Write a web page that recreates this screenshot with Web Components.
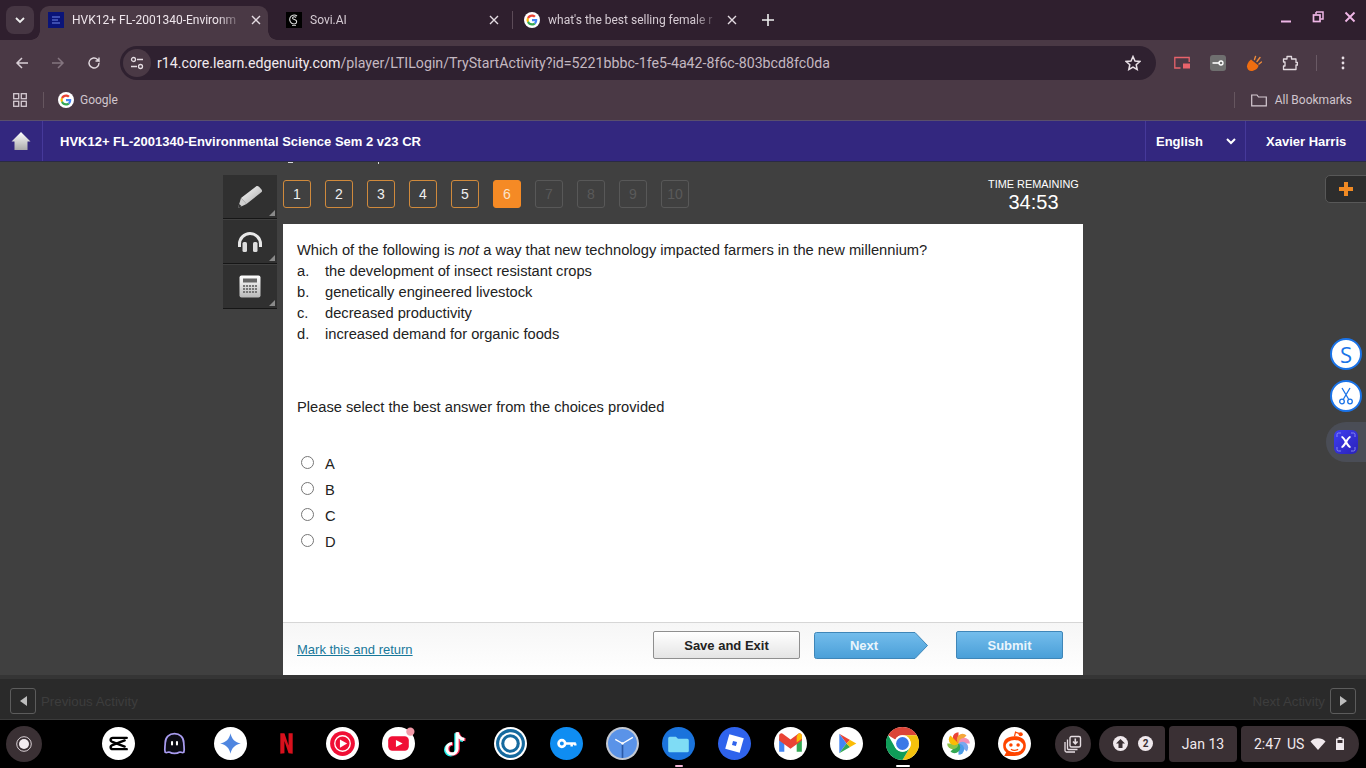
<!DOCTYPE html>
<html>
<head>
<meta charset="utf-8">
<title>Edgenuity</title>
<style>
  html, body { margin: 0; height: 768px; overflow: hidden; background: #000; }
  body { display: flex; flex-direction: column; font-family: "Liberation Sans", Arial, sans-serif; }
</style>
</head>
<body>
<tab-strip></tab-strip>
<browser-toolbar></browser-toolbar>
<bookmark-bar></bookmark-bar>
<course-header></course-header>
<quiz-stage>
  <quiz-question></quiz-question>
</quiz-stage>
<activity-bar></activity-bar>
<os-shelf></os-shelf>

<script>
const G_ICON = `<svg viewBox="0 0 48 48" width="100%" height="100%"><circle cx="24" cy="24" r="24" fill="#fff"/><g transform="translate(7.5 7.5) scale(.6875)"><path fill="#EA4335" d="M24 9.5c3.5 0 6.7 1.2 9.2 3.6l6.9-6.9C35.900 2.400 30.500 0 24 0 14.600 0 6.500 5.400 2.600 13.200l8 6.200C12.500 13.700 17.800 9.500 24 9.500z"/><path fill="#4285F4" d="M46.900 24.500c0-1.600-.1-3.100-.4-4.500H24v9h12.900c-.6 3-2.200 5.500-4.700 7.200l7.700 6c4.500-4.200 7-10.300 7-17.700z"/><path fill="#FBBC05" d="M10.500 28.600A14.500 14.500 0 0 1 10.500 19.400l-8-6.200A24 24 0 0 0 2.600 34.800z"/><path fill="#34A853" d="M24 48c6.500 0 11.900-2.100 15.900-5.800l-7.700-6c-2.200 1.500-4.900 2.300-8.200 2.300-6.200 0-11.500-4.200-13.400-9.900l-8 6.200C6.500 42.600 14.600 48 24 48z"/></g></svg>`;

const SHELF_ICONS = {
  capcut: `<svg viewBox="0 0 32 32"><circle cx="16" cy="16" r="16" fill="#fff"/><g fill="none" stroke="#000" stroke-width="2.300" stroke-linecap="round"><path d="M24 10.500H10.500C8 10.500 7.500 13.500 10 14.500L22 19"/><path d="M24 21.500H10.500C8 21.500 7.500 18.500 10 17.500L22 13"/></g></svg>`,
  ghost: `<svg viewBox="0 0 32 32"><path d="M7 24.500c-1-3 0-5.500 0-9C7 10 11 6.500 16 6.500s9 3.500 9 9c0 3.500 1 6 0 9-2 1-3-1-4.500 0s-3 1-4.500 1-3 0-4.500-1-2.500 1-4.500 0z" fill="#0b0b14" stroke="#a99cf0" stroke-width="1.700"/><rect x="12.600" y="13.500" width="2" height="4.500" rx="1" fill="#fff"/><rect x="17.400" y="13.500" width="2" height="4.500" rx="1" fill="#fff"/></svg>`,
  gemini: `<svg viewBox="0 0 32 32"><circle cx="16" cy="16" r="16" fill="#fff"/><path d="M16 6c1 5.500 4.500 9 10 10-5.500 1-9 4.500-10 10-1-5.500-4.500-9-10-10 5.500-1 9-4.500 10-10z" fill="#4f86e0"/></svg>`,
  netflix: `<svg viewBox="0 0 32 32"><path d="M10 6h4l4 12V6h4v20l-4-.5-4-12V25.500l-4 .5z" fill="#d8101c"/></svg>`,
  ytmusic: `<svg viewBox="0 0 32 32"><circle cx="16" cy="16" r="16" fill="#fff"/><circle cx="16" cy="16" r="12" fill="#f00f35"/><circle cx="16" cy="16" r="7.500" fill="none" stroke="#fff" stroke-width="1.300"/><path d="M13.500 12l7 4-7 4z" fill="#fff"/></svg>`,
  youtube: `<svg viewBox="0 0 32 32"><circle cx="16" cy="16" r="16" fill="#fff"/><rect x="6" y="9" width="20" height="14" rx="4" fill="#f00f35"/><path d="M13.500 12.500l6.500 3.500-6.500 3.500z" fill="#fff"/><circle cx="27.500" cy="4.500" r="4" fill="#f29aa8"/></svg>`,
  tiktok: `<svg viewBox="0 0 32 32"><g fill="none" stroke-width="3"><path d="M18.500 5v16a5 5 0 1 1-5-5M18.500 5c.5 4 3 6.500 7 7" stroke="#25f4ee" transform="translate(-1.200 1)"/><path d="M18.500 5v16a5 5 0 1 1-5-5M18.500 5c.5 4 3 6.500 7 7" stroke="#fe2c55" transform="translate(1.200 .4)"/><path d="M18.500 5v16a5 5 0 1 1-5-5M18.500 5c.5 4 3 6.500 7 7" stroke="#fff"/></g></svg>`,
  rings: `<svg viewBox="0 0 32 32"><circle cx="16" cy="16" r="16" fill="#fff"/><circle cx="16" cy="16" r="14" fill="#15699e"/><circle cx="16" cy="16" r="11" fill="#fff"/><circle cx="16" cy="16" r="9" fill="#15699e"/><circle cx="16" cy="16" r="6" fill="#fff"/></svg>`,
  key: `<svg viewBox="0 0 32 32"><circle cx="16" cy="16" r="16" fill="#0f8df2"/><circle cx="11.500" cy="16" r="3.200" fill="none" stroke="#fff" stroke-width="2.600"/><path d="M14.500 16H25M21 16v3M24.500 16v2" stroke="#fff" stroke-width="2.400"/></svg>`,
  clock: `<svg viewBox="0 0 32 32"><circle cx="16" cy="16" r="16" fill="#c4c9d2"/><circle cx="16" cy="16" r="14" fill="#5a93e8"/><path d="M16 16V30" stroke="#2c5aa6" stroke-width="1.600"/><path d="M16 16L9 12M16 16l10-6" stroke="#fff" stroke-width="1.300"/><circle cx="16" cy="16" r="1.200" fill="#fff"/></svg>`,
  files: `<svg viewBox="0 0 32 32"><circle cx="16" cy="16" r="16" fill="#1a73dc"/><path d="M6 11a1.500 1.500 0 0 1 1.500-1.500h6l2 2h9A1.500 1.500 0 0 1 26 13v10a1.500 1.500 0 0 1-1.500 1.500h-17A1.500 1.500 0 0 1 6 23z" fill="#7fdcf5"/></svg>`,
  roblox: `<svg viewBox="0 0 32 32"><circle cx="16" cy="16" r="16" fill="#2f63ec"/><path d="M11 7l14 4-4 14-14-4z" fill="#fff"/><rect x="14" y="14" width="4" height="4" transform="rotate(15 16 16)" fill="#2f63ec"/></svg>`,
  gmail: `<svg viewBox="0 0 32 32"><circle cx="16" cy="16" r="16" fill="#fff"/><path d="M5 11v13h5V14z" fill="#4285f4"/><path d="M22 14v10h5V11z" fill="#34a853"/><path d="M5 8.500V13l11 8 11-8V8.500c0-2-2.200-3-3.800-1.800L16 12 8.800 6.700C7.200 5.500 5 6.500 5 8.500z" fill="#ea4335"/><path d="M22 9.500V15l5-3.700V8.500c0-2-2.200-3-3.800-1.800z" fill="#fbbc05"/></svg>`,
  play: `<svg viewBox="0 0 32 32"><circle cx="16" cy="16" r="16" fill="#fff"/><path d="M9 6.500L16 16l3.500-3.500z" fill="#ea4335"/><path d="M9 6.500V25.500L16 16z" fill="#4285f4"/><path d="M9 25.500L19.500 19.500 16 16z" fill="#34a853"/><path d="M19.500 12.500L16 16l3.500 3.500L25.500 16z" fill="#fbbc05"/></svg>`,
  chrome: `<svg viewBox="0 0 32 32"><circle cx="16" cy="16" r="16" fill="#fff"/><path d="M16 0a16 16 0 0 1 13.900 8H16a8 8 0 0 0-7 4L2.100 8A16 16 0 0 1 16 0z" fill="#db4437"/><path d="M29.900 8A16 16 0 0 1 16 32l7-12a8 8 0 0 0 0-8 8 8 0 0 0-7-4z" fill="#f4c20d"/><path d="M2.100 8L9 20a8 8 0 0 0 7 4 8 8 0 0 0 7-4l-7 12A16 16 0 0 1 2.100 8z" fill="#0f9d58"/><circle cx="16" cy="16" r="8" fill="#fff"/><circle cx="16" cy="16" r="6.200" fill="#3b78e7"/></svg>`,
  photos: `<svg viewBox="0 0 32 32"><circle cx="16" cy="16" r="16" fill="#fff"/><path d="M16 16a5.500 5.500 0 0 1 0-11z" fill="#ea4335" transform="rotate(0 16 16)"/><path d="M16 16a5.500 5.500 0 0 1 0-11z" fill="#f4a63a" transform="rotate(45 16 16)"/><path d="M16 16a5.500 5.500 0 0 1 0-11z" fill="#f48fb1" transform="rotate(90 16 16)"/><path d="M16 16a5.500 5.500 0 0 1 0-11z" fill="#7aa7ee" transform="rotate(135 16 16)"/><path d="M16 16a5.500 5.500 0 0 1 0-11z" fill="#4a9be8" transform="rotate(180 16 16)"/><path d="M16 16a5.500 5.500 0 0 1 0-11z" fill="#34a853" transform="rotate(225 16 16)"/><path d="M16 16a5.500 5.500 0 0 1 0-11z" fill="#8bc34a" transform="rotate(270 16 16)"/><path d="M16 16a5.500 5.500 0 0 1 0-11z" fill="#fbbc05" transform="rotate(315 16 16)"/></svg>`,
  reddit: `<svg viewBox="0 0 32 32"><circle cx="16" cy="16" r="16" fill="#fff"/><path d="M16 9C9 9 5 12.500 5 18c0 3 1 5 3 6.500L6 28h10c7 0 11-4 11-10 0-5.500-4-9-11-9z" fill="#ff4500"/><ellipse cx="16" cy="18.500" rx="8.500" ry="6" fill="#fff"/><circle cx="12.500" cy="17.500" r="1.700" fill="#ff4500"/><circle cx="19.500" cy="17.500" r="1.700" fill="#ff4500"/><path d="M12.500 21.500c2 1.400 5 1.400 7 0" stroke="#ff4500" stroke-width="1.200" fill="none"/><circle cx="22" cy="7" r="2" fill="#ff4500"/><path d="M16 9l1-4 4 1.500" stroke="#ff4500" stroke-width="1.200" fill="none"/></svg>`
};

class BrowserTab extends HTMLElement {
  constructor() {
    super();
    this.attachShadow({ mode: "open" });
  }

  connectedCallback() {
    const label = this.getAttribute("label") || "";
    this.shadowRoot.innerHTML = `
      <style>
        :host { display: flex; align-items: center; width: 228px; height: 34px; box-sizing: border-box; padding: 0 7px 6px 8px; position: relative; color: #d6ccd4; font: 12px Roboto, sans-serif; }
        :host([active]) { background: #4a3945; border-radius: 9px 9px 0 0; color: #efe6ec; }
        :host([active])::before, :host([active])::after { content: ""; position: absolute; bottom: 0; width: 9px; height: 9px; }
        :host([active])::before { left: -9px; background: radial-gradient(circle at 0 0, transparent 8.500px, #4a3945 9px); }
        :host([active])::after { right: -9px; background: radial-gradient(circle at 100% 0, transparent 8.500px, #4a3945 9px); }
        .fav { width: 16px; height: 16px; flex: none; display: flex; }
        .label { flex: 1; margin-left: 8px; white-space: nowrap; overflow: hidden; -webkit-mask-image: linear-gradient(90deg, #000 85%, transparent 100%); mask-image: linear-gradient(90deg, #000 85%, transparent 100%); }
        svg.x { width: 10px; height: 10px; flex: none; margin-left: 8px; }
      </style>
      <span class="fav"><slot></slot></span>
      <span class="label">${label}</span>
      <svg class="x" viewBox="0 0 10 10"><path d="M1 1l8 8M9 1l-8 8" stroke="#e4dbe2" stroke-width="1.400"/></svg>
    `;
  }
}
customElements.define("browser-tab", BrowserTab);

class TabStrip extends HTMLElement {
  constructor() {
    super();
    this.attachShadow({ mode: "open" });
  }

  connectedCallback() {
    this.shadowRoot.innerHTML = `
      <style>
        :host { display: flex; align-items: flex-end; height: 40px; flex: none; background: #2f1f2e; box-sizing: border-box; padding-left: 6px; }
        .search { width: 28px; height: 28px; margin: 0 6px 6px 0; border-radius: 8px; background: #463643; display: flex; align-items: center; justify-content: center; }
        .tabs { display: flex; align-items: flex-end; }
        .sep { width: 1px; height: 18px; background: #5c4b58; margin: 0 3px 11px 6px; }
        .gap { width: 10px; }
        .plus { margin: 0 0 14px 18px; width: 12px; height: 12px; }
        .win { margin-left: auto; display: flex; align-items: center; gap: 20px; padding: 0 10px 17px 0; }
        .fav-e { width: 16px; height: 16px; background: #0a1478; display: block; }
        .fav-s { width: 16px; height: 16px; background: #000; display: block; }
      </style>
      <div class="search"><svg width="10" height="7" viewBox="0 0 10 7"><path d="M1 1l4 4 4-4" fill="none" stroke="#eee" stroke-width="1.800"/></svg></div>
      <div class="tabs">
        <browser-tab active label="HVK12+ FL-2001340-Environm">
          <svg class="fav-e" viewBox="0 0 16 16"><path d="M4 4h8v2H4zM4 7h6v2H4zM4 10h8v2H4z" fill="#3d4db0"/></svg>
        </browser-tab>
        <div class="gap"></div>
        <browser-tab label="Sovi.AI">
          <svg class="fav-s" viewBox="0 0 16 16"><path d="M11 4a4.500 4.500 0 1 0-3 8c2 0 3-1.500 2.500-3S6 7.500 6.500 6 9 4.500 10 5.500" fill="none" stroke="#ddd" stroke-width="1.100"/><path d="M6 13.500h4" stroke="#aaa"/></svg>
        </browser-tab>
        <div class="sep"></div>
        <browser-tab label="what's the best selling female r">
          ${G_ICON.replace('width="100%" height="100%"', 'width="16" height="16"')}
        </browser-tab>
      </div>
      <svg class="plus" viewBox="0 0 12 12"><path d="M6 0v12M0 6h12" stroke="#eee" stroke-width="1.600"/></svg>
      <div class="win">
        <svg width="12" height="12" viewBox="0 0 12 12"><path d="M1 10.500h10" stroke="#efb6e6" stroke-width="2"/></svg>
        <svg width="12" height="12" viewBox="0 0 12 12"><path d="M4 1h7v7H8.500M4 1v2.500" fill="none" stroke="#efb6e6" stroke-width="1.500"/><rect x="1.500" y="4" width="6.500" height="6.500" fill="none" stroke="#efb6e6" stroke-width="1.700"/></svg>
        <svg width="12" height="12" viewBox="0 0 12 12"><path d="M1.500 1.500l9 9M10.500 1.500l-9 9" stroke="#efb6e6" stroke-width="1.900"/></svg>
      </div>
    `;
  }
}
customElements.define("tab-strip", TabStrip);

class BrowserToolbar extends HTMLElement {
  constructor() {
    super();
    this.attachShadow({ mode: "open" });
  }

  connectedCallback() {
    this.shadowRoot.innerHTML = `
      <style>
        :host { display: flex; align-items: center; height: 40px; flex: none; background: #4a3945; box-sizing: border-box; padding: 6px 0 0 15px; }
        .nav { width: 14px; height: 14px; margin-right: 22px; flex: none; }
        .omni { width: 1036px; height: 34px; flex: none; margin-left: -1px; box-sizing: border-box; background: #2f2130; border-radius: 17px; display: flex; align-items: center; padding: 0 15px 0 3px; font: 14.200px Roboto, sans-serif; color: #c4b8c1; }
        .tune { width: 28px; height: 28px; border-radius: 50%; background: #4a3945; display: flex; align-items: center; justify-content: center; margin-right: 6px; }
        b { font-weight: 400; color: #f1e9ee; }
        .star { margin-left: auto; }
        .ext { display: flex; align-items: center; }
      </style>
      <svg class="nav" viewBox="0 0 14 14"><path d="M13 7H2M7 2L2 7l5 5" fill="none" stroke="#d9cfd6" stroke-width="1.500"/></svg>
      <svg class="nav" viewBox="0 0 14 14"><path d="M1 7h11M7 2l5 5-5 5" fill="none" stroke="#84757f" stroke-width="1.500"/></svg>
      <svg class="nav" style="margin-right:20px" viewBox="0 0 14 14"><path d="M12 7a5 5 0 1 1-1.500-3.600L12 5V1.500M12 5H8.500" fill="none" stroke="#e0d7dd" stroke-width="1.400"/></svg>
      <div class="omni">
        <span class="tune"><svg width="14" height="14" viewBox="0 0 14 14"><g fill="none" stroke="#e5dce2" stroke-width="1.300"><circle cx="3.500" cy="3.500" r="2"/><path d="M7 3.500h6M1 10.500h6"/><circle cx="10.500" cy="10.500" r="2"/></g></svg></span>
        <span><b>r14.core.learn.edgenuity.com</b>/player/LTILogin/TryStartActivity?id=5221bbbc-1fe5-4a42-8f6c-803bcd8fc0da</span>
        <svg class="star" width="16" height="16" viewBox="0 0 16 16"><path d="M8 1.500l2 4.500 4.800.5-3.600 3.200 1 4.800L8 12l-4.200 2.500 1-4.800L1.200 6.500 6 6z" fill="none" stroke="#e9e0e6" stroke-width="1.500"/></svg>
      </div>
      <div class="ext">
        <svg style="margin-left:18px" width="16" height="14" viewBox="0 0 16 14"><path d="M6.500 12H.800V1.500h14.400V6" fill="none" stroke="#e8636b" stroke-width="1.300"/><rect x="9" y="7.500" width="7" height="5" fill="#e8636b"/></svg>
        <svg style="margin-left:20px" width="16" height="16" viewBox="0 0 16 16"><rect width="16" height="16" rx="3" fill="#6f6f6f"/><path d="M2.500 8h7" stroke="#fff" stroke-width="1.600"/><circle cx="11" cy="8" r="2" fill="none" stroke="#fff" stroke-width="1.300"/></svg>
        <svg style="margin-left:20px" width="16" height="17" viewBox="0 0 16 17"><path d="M5 4.500l7.500 6C12 15 5 17.500 2.500 15S.5 8 5 4.500z" fill="#ef6d10"/><path d="M8.500 4.500L9.500 1.500M11 6.500L14 2.500M13 9l2.500-2" stroke="#ef8a3a" stroke-width="1.400" stroke-linecap="round"/></svg>
        <svg style="margin-left:20px" width="16" height="16" viewBox="0 0 16 16"><path d="M1.500 4H5V1.500h4.500V4H14v3.500h1.500v2.500H14v4.500H1.500V11H3V7H1.500z" fill="none" stroke="#e3dae0" stroke-width="1.300" stroke-linejoin="round"/></svg>
        <span style="width:1px;height:16px;background:#6a5a65;margin-left:18px"></span>
        <svg style="margin-left:24px" width="4" height="14" viewBox="0 0 4 14"><circle cx="2" cy="2" r="1.400" fill="#e8dfe5"/><circle cx="2" cy="7" r="1.400" fill="#e8dfe5"/><circle cx="2" cy="12" r="1.400" fill="#e8dfe5"/></svg>
      </div>
    `;
  }
}
customElements.define("browser-toolbar", BrowserToolbar);

class BookmarkBar extends HTMLElement {
  constructor() {
    super();
    this.attachShadow({ mode: "open" });
  }

  connectedCallback() {
    this.shadowRoot.innerHTML = `
      <style>
        :host { display: flex; align-items: center; height: 41px; flex: none; background: #4a3945; box-sizing: border-box; padding: 0 14px 0 13px; font: 12px Roboto, sans-serif; color: #d0c5cd; border-bottom: 1px solid #5a4f6c; }
        .sep { width: 1px; height: 16px; background: #66565f; }
        .g { width: 16px; height: 16px; margin: 0 6px 0 0; display: flex; }
        .right { margin-left: auto; display: flex; align-items: center; }
      </style>
      <svg width="14" height="14" viewBox="0 0 14 14"><g fill="none" stroke="#d5cad2" stroke-width="1.300"><rect x=".7" y=".7" width="5" height="5"/><rect x="8.300" y=".7" width="5" height="5"/><rect x=".7" y="8.300" width="5" height="5"/><rect x="8.300" y="8.300" width="5" height="5"/></g></svg>
      <span class="sep" style="margin:0 14px 0 16px"></span>
      <span class="g">${G_ICON}</span>
      <span>Google</span>
      <div class="right">
        <span class="sep" style="margin-right:16px"></span>
        <svg width="16" height="13" viewBox="0 0 16 13" style="margin-right:8px"><path d="M.7 11.800V1H6l1.500 2h7.800v8.800z" fill="none" stroke="#d5cad2" stroke-width="1.200"/></svg>
        <span>All Bookmarks</span>
      </div>
    `;
  }
}
customElements.define("bookmark-bar", BookmarkBar);

class CourseHeader extends HTMLElement {
  constructor() {
    super();
    this.attachShadow({ mode: "open" });
  }

  connectedCallback() {
    this.shadowRoot.innerHTML = `
      <style>
        :host { display: flex; align-items: stretch; height: 41px; flex: none; background: #33277f; color: #fff; font: bold 13px "Liberation Sans", Arial, sans-serif; box-sizing: border-box; border-bottom: 1px solid #2a2a44; }
        .cell { display: flex; align-items: center; box-sizing: border-box; }
        .home { width: 43px; justify-content: center; border-right: 1px solid #46399a; }
        .title { flex: 1; padding-left: 17px; }
        .lang { width: 100px; padding: 0 9px 0 10px; justify-content: space-between; border-left: 1px solid #46399a; }
        .user { width: 121px; padding-left: 20px; border-left: 1px solid #46399a; }
      </style>
      <div class="cell home">
        <svg width="20" height="20" viewBox="0 0 20 20"><defs><linearGradient id="hm" x1="0" y1="0" x2="0" y2="1"><stop offset="0" stop-color="#fff"/><stop offset="1" stop-color="#aaa"/></linearGradient></defs><path d="M10 1l9.500 9.500H16.500V19h-13v-8.500H.5z" fill="url(#hm)"/></svg>
      </div>
      <div class="cell title">HVK12+ FL-2001340-Environmental Science Sem 2 v23 CR</div>
      <div class="cell lang">English <svg width="10" height="7" viewBox="0 0 10 7"><path d="M1 1l4 4 4-4" fill="none" stroke="#fff" stroke-width="2"/></svg></div>
      <div class="cell user">Xavier Harris</div>
    `;
  }
}
customElements.define("course-header", CourseHeader);

class ToolButton extends HTMLElement {
  constructor() {
    super();
    this.attachShadow({ mode: "open" });
  }

  connectedCallback() {
    this.shadowRoot.innerHTML = `
      <style>
        :host { display: flex; align-items: center; justify-content: center; width: 54px; height: 44px; box-sizing: border-box; background: #303030; border-bottom: 1px solid #161616; margin-bottom: 1px; position: relative; }
        :host::after { content: ""; position: absolute; right: 2px; bottom: 2px; border-style: solid; border-width: 0 0 6px 6px; border-color: transparent transparent #8a8a8a transparent; }
      </style>
      <slot></slot>
    `;
  }
}
customElements.define("tool-button", ToolButton);

class QuizNumber extends HTMLElement {
  constructor() {
    super();
    this.attachShadow({ mode: "open" });
  }

  connectedCallback() {
    this.shadowRoot.innerHTML = `
      <style>
        :host { display: flex; align-items: center; justify-content: center; width: 28px; height: 28px; box-sizing: border-box; border: 1px solid #d08a3c; border-radius: 3px; color: #f0f0f0; font: 14px "Liberation Sans", Arial, sans-serif; }
        :host([current]) { background: #f58a25; border-color: #f58a25; color: #fbe3c8; }
        :host([locked]) { border-color: #585858; color: #5a5a5a; }
      </style>
      <slot></slot>
    `;
  }
}
customElements.define("quiz-number", QuizNumber);

class QuizStage extends HTMLElement {
  constructor() {
    super();
    this.attachShadow({ mode: "open" });
  }

  connectedCallback() {
    const nums = [1, 2, 3, 4, 5, 6, 7, 8, 9, 10].map((n) => {
      const state = n === 6 ? "current" : n > 6 ? "locked" : "";
      return `<quiz-number ${state}>${n}</quiz-number>`;
    }).join("");

    this.shadowRoot.innerHTML = `
      <style>
        :host { display: flex; flex: 1; min-height: 0; background: #404040; box-sizing: border-box; padding-left: 223px; position: relative; overflow: hidden; }
        .tools { width: 54px; margin-top: 13px; }
        .main { width: 800px; margin-left: 6px; display: flex; flex-direction: column; }
        .top { height: 62px; flex: none; display: flex; align-items: flex-start; color: #fff; }
        .nums { display: flex; gap: 14px; padding-top: 18px; }
        .timer { margin-left: auto; padding: 16px 5px 0 0; text-align: center; width: 90px; }
        .timer small { display: block; font-size: 10.900px; line-height: 13px; white-space: nowrap; }
        .timer div { font-size: 20px; line-height: 22px; padding-left: 1px; }
        .card { flex: 1; min-height: 0; display: flex; }
        .scrap { position: absolute; top: 0; height: 2px; background: #d8d8d8; }
        .plus { position: absolute; right: -1px; top: 13px; width: 42px; height: 28px; box-sizing: border-box; background: #2d2d2d; border: 1px solid #585858; border-radius: 5px 0 0 5px; display: flex; align-items: center; justify-content: center; }
        .side { position: absolute; border-radius: 50%; width: 32px; height: 32px; right: 4px; background: #fff; border: 2px solid #1a73e8; box-sizing: border-box; display: flex; align-items: center; justify-content: center; color: #1a73e8; font: 22px "Open Sans", sans-serif; }
        .xpill { position: absolute; right: 0; top: 260px; width: 40px; height: 40px; background: #4a4d56; border-radius: 20px 0 0 20px; display: flex; align-items: center; justify-content: center; }
        .xicon { width: 24px; height: 24px; border-radius: 6px; background: linear-gradient(135deg, #3d3df0, #2a22b8); display: flex; align-items: center; justify-content: center; }
      </style>
      <div class="tools">
        <tool-button>
          <svg width="26" height="24" viewBox="0 0 26 24"><defs><linearGradient id="pn" x1="0" y1="0" x2="1" y2="1"><stop offset="0" stop-color="#fff"/><stop offset="1" stop-color="#a8a8a8"/></linearGradient></defs><path d="M19 1.500c1-.8 2-.6 3 .3l2.500 2.800c.8 1 .7 1.900-.2 2.700L9.500 19l-5.500-6z" fill="url(#pn)"/><path d="M4 13l-3 10 8.500-4z" fill="#d0d0d0"/><path d="M1 23l1.200-4 2.500 2.200z" fill="#333"/></svg>
        </tool-button>
        <tool-button>
          <svg width="26" height="20" viewBox="0 0 26 20"><path d="M2.500 15v-3a10.500 10.500 0 0 1 21 0v3" fill="none" stroke="#e8e8e8" stroke-width="3"/><rect x="5.500" y="10" width="4.500" height="10" rx="1.500" fill="#ddd"/><rect x="16" y="10" width="4.500" height="10" rx="1.500" fill="#ddd"/></svg>
        </tool-button>
        <tool-button>
          <svg width="22" height="23" viewBox="0 0 22 23"><defs><linearGradient id="cl" x1="0" y1="0" x2="0" y2="1"><stop offset="0" stop-color="#fff"/><stop offset="1" stop-color="#b8b8b8"/></linearGradient></defs><rect x=".5" y=".5" width="21" height="22" rx="2" fill="url(#cl)"/><rect x="4" y="3.500" width="14" height="4" fill="#666"/><path d="M4 11h14M4 14h14M4 17h14" stroke="#777" stroke-width="2" stroke-dasharray="2.100 .9"/></svg>
        </tool-button>
      </div>
      <div class="main">
        <div class="top">
          <div class="nums">${nums}</div>
          <div class="timer"><small>TIME REMAINING</small><div>34:53</div></div>
        </div>
        <div class="card"><slot></slot></div>
      </div>
      <div class="scrap" style="left:288px;width:5px;height:1px"></div>
      <div class="scrap" style="left:378px;width:1px"></div>
      <div class="plus"><svg width="14" height="14" viewBox="0 0 14 14"><path d="M7 0v14M0 7h14" stroke="#f08a24" stroke-width="4"/></svg></div>
      <div class="side" style="top:176px">S</div>
      <div class="side" style="top:218px"><svg width="16" height="18" viewBox="0 0 16 18"><g fill="none" stroke="#1a73e8" stroke-width="1.300"><path d="M4 1l6.500 11M12 1L5.500 12"/><circle cx="4" cy="14.500" r="2.300"/><circle cx="12" cy="14.500" r="2.300"/></g></svg></div>
      <div class="xpill"><div class="xicon"><svg width="20" height="20" viewBox="0 0 20 20"><path d="M1 5V2.500A1.500 1.500 0 0 1 2.500 1H5M15 1h2.500A1.500 1.500 0 0 1 19 2.500V5M19 15v2.500a1.500 1.500 0 0 1-1.500 1.500H15M5 19H2.500A1.500 1.500 0 0 1 1 17.500V15" fill="none" stroke="#8f8ff5" stroke-width=".9"/><path d="M5.500 5c3.500 0 5.500 10 9 10M14.500 5c-3.500 0-5.500 10-9 10" fill="none" stroke="#fff" stroke-width="2.200"/></svg></div></div>
    `;
  }
}
customElements.define("quiz-stage", QuizStage);

class QuizQuestion extends HTMLElement {
  constructor() {
    super();
    this.attachShadow({ mode: "open" });
  }

  connectedCallback() {
    const choices = [
      ["a.", "the development of insect resistant crops"],
      ["b.", "genetically engineered livestock"],
      ["c.", "decreased productivity"],
      ["d.", "increased demand for organic foods"],
    ].map(([k, t]) => `<div class="choice"><span>${k}</span><span>${t}</span></div>`).join("");

    const radios = ["A", "B", "C", "D"].map((l) => `
      <label class="radio"><input type="radio" name="answer"><span>${l}</span></label>`).join("");

    this.shadowRoot.innerHTML = `
      <style>
        :host { display: flex; flex-direction: column; flex: 1; background: #fff; color: #222; font: 14.700px/21px "Liberation Sans", Arial, sans-serif; }
        .body { flex: 1; padding: 16px 14px 0; }
        .choice { display: flex; }
        .choice span:first-child { width: 28px; }
        .prompt { margin-top: 52px; }
        .radios { margin-top: 33px; }
        .radio { display: flex; align-items: center; height: 26px; }
        input { margin: 0 11px 4px 4px; width: 13px; height: 13px; accent-color: #444; }
        .foot { height: 53px; flex: none; box-sizing: border-box; border-top: 1px solid #d6d6d6; background: linear-gradient(#f6f6f6, #fff); display: flex; align-items: flex-start; padding: 8px 20px 0 14px; }
        a { color: #18789a; font-size: 13px; line-height: 16px; margin-top: 11px; }
        .btn { height: 28px; box-sizing: border-box; padding-top: 1px; display: flex; align-items: center; justify-content: center; font: bold 13px "Liberation Sans", Arial, sans-serif; border-radius: 2px; }
        .save { width: 147px; margin-left: auto; color: #222; border: 1px solid #8f8f8f; background: linear-gradient(#fff, #e4e4e4); }
        .blue { color: #eaf5fc; background: linear-gradient(#74bdec, #4a9fd8); border: 1px solid #3f86b8; }
        .next { width: 114px; margin: 1px 28px 0 14px; height: 27px; border: 0; padding: 0 14px 0 0; background: none; position: relative; }
        .next svg { position: absolute; left: 0; top: 0; }
        .next span { position: relative; }
        .submit { width: 107px; }
      </style>
      <div class="body">
        <div>Which of the following is <em>not</em> a way that new technology impacted farmers in the new millennium?</div>
        ${choices}
        <div class="prompt">Please select the best answer from the choices provided</div>
        <div class="radios">${radios}</div>
      </div>
      <div class="foot">
        <a href="#">Mark this and return</a>
        <div class="btn save">Save and Exit</div>
        <div class="btn blue next">
          <svg width="114" height="27" viewBox="0 0 114 27"><defs><linearGradient id="nx" x1="0" y1="0" x2="0" y2="1"><stop offset="0" stop-color="#74bdec"/><stop offset="1" stop-color="#4a9fd8"/></linearGradient></defs><path d="M.5 2.500a2 2 0 0 1 2-2H101L113.500 13.500 101 26.500H2.500a2 2 0 0 1-2-2z" fill="url(#nx)" stroke="#3f86b8"/></svg>
          <span>Next</span>
        </div>
        <div class="btn blue submit">Submit</div>
      </div>
    `;
  }
}
customElements.define("quiz-question", QuizQuestion);

class ActivityBar extends HTMLElement {
  constructor() {
    super();
    this.attachShadow({ mode: "open" });
  }

  connectedCallback() {
    this.shadowRoot.innerHTML = `
      <style>
        :host { display: flex; align-items: center; justify-content: space-between; height: 45px; flex: none; box-sizing: border-box; background: #2a2a2a; border-top: 4px solid #353535; border-bottom: 1px solid #3a3a3a; padding: 4px 10px 0; color: #3d3d3d; font: 13.300px "Liberation Sans", Arial, sans-serif; }
        .side { display: flex; align-items: center; gap: 5px; }
        .box { width: 26px; height: 26px; box-sizing: border-box; border: 1px solid #5c5c5c; border-radius: 3px; display: flex; align-items: center; justify-content: center; }
      </style>
      <div class="side"><div class="box"><svg width="7" height="10" viewBox="0 0 7 10"><path d="M7 0v10L0 5z" fill="#bdbdbd"/></svg></div>Previous Activity</div>
      <div class="side">Next Activity<div class="box"><svg width="7" height="10" viewBox="0 0 7 10"><path d="M0 0v10l7-5z" fill="#bdbdbd"/></svg></div></div>
    `;
  }
}
customElements.define("activity-bar", ActivityBar);

class ShelfApp extends HTMLElement {
  constructor() {
    super();
    this.attachShadow({ mode: "open" });
  }

  connectedCallback() {
    const icon = SHELF_ICONS[this.getAttribute("icon")] || "";
    this.shadowRoot.innerHTML = `
      <style>
        :host { display: flex; align-items: center; justify-content: center; width: 33px; height: 33px; margin-right: 23px; position: relative; }
        svg { width: 33px; height: 33px; display: block; }
        :host([open])::after { content: ""; position: absolute; left: 50%; transform: translateX(-50%); bottom: -7px; width: var(--dot-w, 14px); height: 2px; border-radius: 1px; background: var(--dot, #fff); }
      </style>
      ${icon}
    `;
  }
}
customElements.define("shelf-app", ShelfApp);

class OsShelf extends HTMLElement {
  constructor() {
    super();
    this.attachShadow({ mode: "open" });
  }

  connectedCallback() {
    const apps = ["capcut", "ghost", "gemini", "netflix", "ytmusic", "youtube", "tiktok", "rings", "key", "clock", "files", "roblox", "gmail", "play", "chrome", "photos", "reddit"]
      .map((a) => {
        if (a === "files") return `<shelf-app icon="files" open style="--dot:#f2b6d6;--dot-w:8px"></shelf-app>`;
        if (a === "chrome") return `<shelf-app icon="chrome" open></shelf-app>`;
        return `<shelf-app icon="${a}"></shelf-app>`;
      }).join("");

    this.shadowRoot.innerHTML = `
      <style>
        :host { display: flex; align-items: center; height: 48px; flex: none; background: #000; box-sizing: border-box; padding: 0 7px 1px 6px; color: #f0e9ed; font: 14px Roboto, sans-serif; }
        .launcher { width: 36px; height: 36px; border-radius: 50%; background: #3a3034; display: flex; align-items: center; justify-content: center; margin-right: 60px; flex: none; }
        .apps { display: flex; align-items: center; }
        .tray { margin-left: auto; display: flex; gap: 4px; align-items: center; }
        .t { height: 36px; background: #3a3034; display: flex; align-items: center; box-sizing: border-box; }
        .round { width: 36px; border-radius: 50%; margin-right: 4px; justify-content: center; }
        .pill { width: 66px; gap: 10px; border-radius: 18px 4px 4px 18px; padding-left: 14px; }
        .date { width: 68px; border-radius: 4px; justify-content: center; }
        .time { width: 118px; border-radius: 4px 18px 18px 4px; padding-left: 13px; }
        .dot { width: 15px; height: 15px; border-radius: 50%; background: #f0e9ed; display: flex; align-items: center; justify-content: center; color: #3a3034; font: bold 10px Roboto, sans-serif; }
      </style>
      <div class="launcher"><svg width="16" height="16" viewBox="0 0 16 16"><circle cx="8" cy="8" r="7.300" fill="none" stroke="#d9d0d5"/><circle cx="8" cy="8" r="5" fill="#f3ecf0"/></svg></div>
      <div class="apps">${apps}</div>
      <div class="tray">
        <div class="t round"><svg width="18" height="18" viewBox="0 0 18 18"><rect x="6" y="1.500" width="10.500" height="10.500" rx="1.500" fill="none" stroke="#e6dde2" stroke-width="1.400"/><path d="M3.500 4.500v9a1 1 0 0 0 1 1h9M1 7v8.500A1.500 1.500 0 0 0 2.500 17H11" fill="none" stroke="#e6dde2" stroke-width="1.300"/><path d="M11.300 3.500v5M9 6.500l2.300 2.300 2.300-2.300" fill="none" stroke="#e6dde2" stroke-width="1.600"/></svg></div>
        <div class="t pill">
          <span class="dot"><svg width="9" height="9" viewBox="0 0 9 9"><path d="M4.500 0L9 4.500H6.500V9h-4V4.500H0z" fill="#3a3034"/></svg></span>
          <span class="dot">2</span>
        </div>
        <div class="t date">Jan 13</div>
        <div class="t time">
          <span>2:47</span><span style="margin-left:6px">US</span>
          <svg style="margin-left:6px" width="16" height="12" viewBox="0 0 15 12"><path d="M0 3.500C4 -.8 11 -.8 15 3.500L7.500 12z" fill="#f0e9ed"/></svg>
          <svg style="margin-left:10px" width="8" height="13" viewBox="0 0 8 13"><path d="M2.500 0h3v1.500H7.500A.5.5 0 0 1 8 2v10.500a.5.5 0 0 1-.5.5H.5a.5.5 0 0 1-.5-.5V2a.5.5 0 0 1 .5-.5h2z" fill="#f0e9ed"/><rect x="1.500" y="3" width="5" height="3" fill="#3a3034"/></svg>
        </div>
      </div>
    `;
  }
}
customElements.define("os-shelf", OsShelf);
</script>
</body>
</html>
